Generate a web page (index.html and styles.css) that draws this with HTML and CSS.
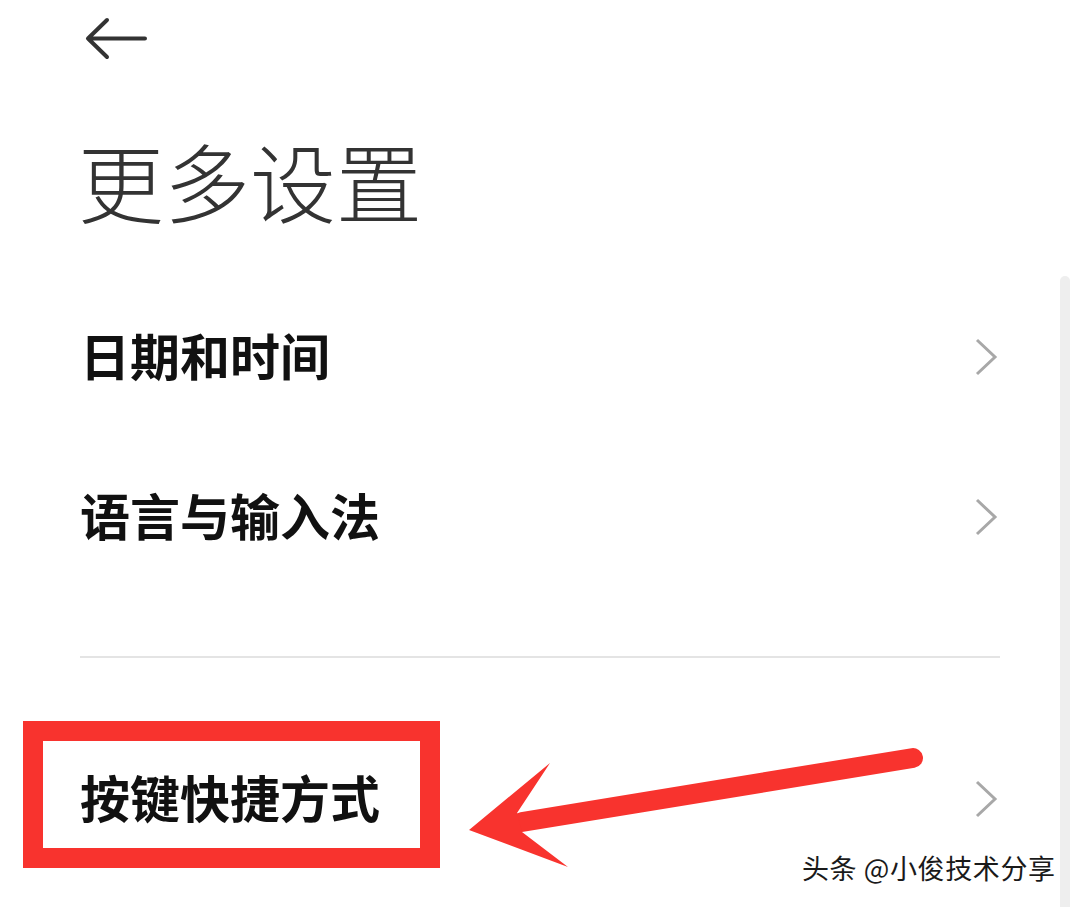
FILE: index.html
```html
<!DOCTYPE html>
<html lang="zh-CN">
<head>
<meta charset="utf-8">
<title>更多设置</title>
<link rel="stylesheet" href="styles.css">
</head>
<body>
<div class="screen">
  <div class="scrollbar"></div>
  <div class="page">
    <header class="topbar">
      <svg class="back" width="70" height="50" viewBox="0 0 70 50">
        <path d="M8 24.5 H65 M27 6 L8 24.5 L27 43" fill="none" stroke="#333" stroke-width="4" stroke-linecap="round" stroke-linejoin="round"/>
      </svg>
    </header>
    <h1 class="title">更多设置</h1>
    <ul class="list">
      <li class="row"><span class="label">日期和时间</span><svg class="chev" width="24" height="40" viewBox="0 0 24 40"><polyline points="3,3 21,20 3,37" fill="none" stroke="#a8a8a8" stroke-width="3"/></svg></li>
      <li class="row"><span class="label">语言与输入法</span><svg class="chev" width="24" height="40" viewBox="0 0 24 40"><polyline points="3,3 21,20 3,37" fill="none" stroke="#a8a8a8" stroke-width="3"/></svg></li>
    </ul>
    <div class="divider"></div>
    <ul class="list">
      <li class="row"><span class="label">按键快捷方式</span><svg class="chev" width="24" height="40" viewBox="0 0 24 40"><polyline points="3,3 21,20 3,37" fill="none" stroke="#a8a8a8" stroke-width="3"/></svg></li>
    </ul>
  </div>
  <div class="highlight"></div>
  <svg class="pointer" width="1080" height="907" viewBox="0 0 1080 907">
    <line x1="522" y1="822" x2="913" y2="758" stroke="#f8332e" stroke-width="20" stroke-linecap="round"/>
    <polygon points="469,830 550,763 517,813 522,832 568,867" fill="#f8332e"/>
  </svg>
  <div class="watermark">头条 @小俊技术分享</div>
</div>
</body>
</html>
```
FILE: styles.css
```css
html, body {
  margin: 0;
  padding: 0;
  background: #ffffff;
}

.screen {
  position: relative;
  width: 1080px;
  height: 907px;
  overflow: hidden;
  background: #ffffff;
  font-family: "Noto Sans CJK SC", "Noto Sans", sans-serif;
}

.page {
  padding: 0 80px;
}

.topbar {
  height: 77px;
  display: flex;
  align-items: flex-start;
  padding-top: 14px;
  box-sizing: border-box;
}

.back {
  display: block;
}

.title {
  margin: 60px 0 0 -2px;
  height: 140px;
  font-size: 86px;
  line-height: 86px;
  font-weight: 300;
  color: #333333;
}

.list {
  list-style: none;
  margin: 0;
  padding: 0;
}

.row {
  height: 160px;
  display: flex;
  align-items: center;
  justify-content: space-between;
}

.label {
  font-size: 50px;
  line-height: 50px;
  font-weight: 700;
  color: #111111;
  margin-bottom: 6px;
}

.chev {
  display: block;
  margin-right: 2px;
}

.divider {
  height: 2px;
  background: #e4e4e4;
  margin: 59px 0 61px 0;
}

.scrollbar {
  position: absolute;
  left: 1060px;
  top: 276px;
  width: 10px;
  height: 640px;
  background: #eeeeee;
  border-radius: 5px 5px 0 0;
}

.highlight {
  position: absolute;
  left: 23px;
  top: 721px;
  width: 377px;
  height: 107px;
  border: 20px solid #f8332e;
}

.pointer {
  position: absolute;
  left: 0;
  top: 0;
}

.watermark {
  position: absolute;
  left: 802px;
  top: 851px;
  font-size: 27px;
  line-height: 34px;
  letter-spacing: 0.6px;
  color: #1a1a1a;
  white-space: nowrap;
  text-shadow: 1px 1px 1px rgba(255,255,255,0.9), -1px 0 1px rgba(255,255,255,0.7);
}
```
